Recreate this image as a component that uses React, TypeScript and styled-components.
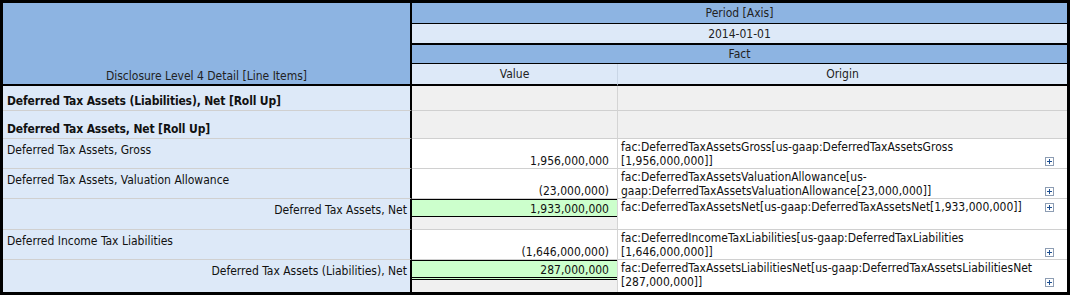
import React from "react";
import styled, { createGlobalStyle } from "styled-components";

const GlobalStyle = createGlobalStyle`
  * { box-sizing: border-box; }
  body {
    margin: 0;
    background: #ffffff;
    font-family: "DejaVu Sans Condensed", "DejaVu Sans", sans-serif;
    font-size: 12px;
    color: #111111;
  }
`;

type Kind = "rollup" | "item" | "total" | "grand";

interface Row {
  label: string;
  kind: Kind;
  height: number;
  value?: string;
  origin?: string[];
  last?: boolean;
}

const rows: Row[] = [
  { label: "Deferred Tax Assets (Liabilities), Net [Roll Up]", kind: "rollup", height: 25 },
  { label: "Deferred Tax Assets, Net [Roll Up]", kind: "rollup", height: 28 },
  {
    label: "Deferred Tax Assets, Gross",
    kind: "item",
    height: 30,
    value: "1,956,000,000",
    origin: ["fac:DeferredTaxAssetsGross[us-gaap:DeferredTaxAssetsGross", "[1,956,000,000]]"],
  },
  {
    label: "Deferred Tax Assets, Valuation Allowance",
    kind: "item",
    height: 30,
    value: "(23,000,000)",
    origin: ["fac:DeferredTaxAssetsValuationAllowance[us-", "gaap:DeferredTaxAssetsValuationAllowance[23,000,000]]"],
  },
  {
    label: "Deferred Tax Assets, Net",
    kind: "total",
    height: 31,
    value: "1,933,000,000",
    origin: ["fac:DeferredTaxAssetsNet[us-gaap:DeferredTaxAssetsNet[1,933,000,000]]"],
  },
  {
    label: "Deferred Income Tax Liabilities",
    kind: "item",
    height: 30,
    value: "(1,646,000,000)",
    origin: ["fac:DeferredIncomeTaxLiabilities[us-gaap:DeferredTaxLiabilities", "[1,646,000,000]]"],
  },
  {
    label: "Deferred Tax Assets (Liabilities), Net",
    kind: "grand",
    height: 32,
    value: "287,000,000",
    origin: ["fac:DeferredTaxAssetsLiabilitiesNet[us-gaap:DeferredTaxAssetsLiabilitiesNet", "[287,000,000]]"],
    last: true,
  },
];

const Table = styled.table`
  width: 1070px;
  border: 3px solid #000;
  border-collapse: separate;
  border-spacing: 0;
  table-layout: fixed;
`;

const HeadRow = styled.tr<{ $h: number }>`
  height: ${(p) => p.$h}px;
`;

const LineItemsHead = styled.th`
  background: #8db4e2;
  border-right: 2px solid #000;
  border-bottom: 2px solid #000;
  vertical-align: bottom;
  text-align: center;
  font-weight: normal;
  line-height: 14px;
  padding: 0 0 1px;
  color: #222;
`;

const HeadCell = styled.th<{ $dark?: boolean; $line: number; $divider?: boolean }>`
  background: ${(p) => (p.$dark ? "#8db4e2" : "#dde9f8")};
  border-bottom: ${(p) => p.$line}px solid #000;
  border-right: ${(p) => (p.$divider ? "1px solid #c9d6e6" : "none")};
  font-weight: normal;
  text-align: center;
  vertical-align: middle;
  line-height: 14px;
  padding: 0;
  color: #222;
`;

const BodyRow = styled.tr<{ $h: number }>`
  height: ${(p) => p.$h}px;
`;

const LabelCell = styled.td<{ $kind: Kind; $last?: boolean }>`
  background: #dde9f8;
  border-right: 2px solid #000;
  border-bottom: ${(p) => (p.$last ? "none" : "1px solid #d0d0d0")};
  vertical-align: ${(p) => (p.$kind === "rollup" ? "bottom" : "top")};
  line-height: 14px;
  white-space: nowrap;
  font-weight: ${(p) => (p.$kind === "rollup" ? "bold" : "normal")};
  letter-spacing: ${(p) => (p.$kind === "rollup" ? "-0.15px" : "normal")};
  text-align: ${(p) => (p.$kind === "total" || p.$kind === "grand" ? "right" : "left")};
  padding: ${(p) => (p.$kind === "rollup" ? "0 4px 2px 4px" : "4px 3px 0 4px")};
`;

const ValueCell = styled.td<{ $kind: Kind; $last?: boolean }>`
  background: ${(p) => (p.$kind === "item" ? "#ffffff" : "#f0f0f0")};
  border-right: 1px solid #d4d4d4;
  border-bottom: ${(p) => (p.$last ? "none" : "1px solid #d0d0d0")};
  vertical-align: ${(p) => (p.$kind === "item" ? "bottom" : "top")};
  text-align: right;
  line-height: 14px;
  white-space: nowrap;
  padding: ${(p) => (p.$kind === "item" ? "0 8px 0 0" : "0")};
`;

const TotalBox = styled.div<{ $grand?: boolean }>`
  display: flex;
  align-items: flex-end;
  justify-content: flex-end;
  height: ${(p) => (p.$grand ? 20 : 18)}px;
  background: #ccffcc;
  border-top: 1px solid #000;
  border-bottom: ${(p) => (p.$grand ? "3px double #000" : "1px solid #000")};
  padding-right: 8px;
  line-height: 14px;
`;

const OriginCell = styled.td<{ $empty?: boolean; $last?: boolean }>`
  background: ${(p) => (p.$empty ? "#f0f0f0" : "#ffffff")};
  border-bottom: ${(p) => (p.$last ? "none" : "1px solid #d0d0d0")};
  vertical-align: top;
  padding: 1px 0 0 3px;
`;

const OriginWrap = styled.div`
  display: flex;
  align-items: flex-end;
`;

const OriginText = styled.div`
  flex: 1;
  line-height: 14px;
  white-space: nowrap;
`;

const ExpandIcon = styled.svg`
  flex: none;
  width: 9px;
  height: 9px;
  margin: 0 13px 2px 4px;
`;

const Expand = () => (
  <ExpandIcon viewBox="0 0 9 9">
    <rect x="0.5" y="0.5" width="8" height="8" fill="#ffffff" stroke="#8d9db3" />
    <path d="M2 4.5h5M4.5 2v5" stroke="#1d4f91" strokeWidth="1" />
  </ExpandIcon>
);

export default function App() {
  return (
    <>
      <GlobalStyle />
      <Table>
        <colgroup>
          <col style={{ width: 409 }} />
          <col style={{ width: 206 }} />
          <col style={{ width: 449 }} />
        </colgroup>
        <thead>
          <HeadRow $h={21}>
            <LineItemsHead rowSpan={4}>Disclosure Level 4 Detail [Line Items]</LineItemsHead>
            <HeadCell colSpan={2} $dark $line={1}>
              Period [Axis]
            </HeadCell>
          </HeadRow>
          <HeadRow $h={21}>
            <HeadCell colSpan={2} $line={2}>
              2014-01-01
            </HeadCell>
          </HeadRow>
          <HeadRow $h={19}>
            <HeadCell colSpan={2} $dark $line={1}>
              Fact
            </HeadCell>
          </HeadRow>
          <HeadRow $h={22}>
            <HeadCell $line={2} $divider>
              Value
            </HeadCell>
            <HeadCell $line={2}>Origin</HeadCell>
          </HeadRow>
        </thead>
        <tbody>
          {rows.map((r) => (
            <BodyRow key={r.label} $h={r.height}>
              <LabelCell $kind={r.kind} $last={r.last}>
                {r.label}
              </LabelCell>
              <ValueCell $kind={r.kind} $last={r.last}>
                {r.kind === "item" && r.value}
                {(r.kind === "total" || r.kind === "grand") && (
                  <TotalBox $grand={r.kind === "grand"}>{r.value}</TotalBox>
                )}
              </ValueCell>
              <OriginCell $empty={!r.origin} $last={r.last}>
                {r.origin && (
                  <OriginWrap>
                    <OriginText>
                      {r.origin.map((line, i) => (
                        <div key={i}>{line}</div>
                      ))}
                    </OriginText>
                    <Expand />
                  </OriginWrap>
                )}
              </OriginCell>
            </BodyRow>
          ))}
        </tbody>
      </Table>
    </>
  );
}
